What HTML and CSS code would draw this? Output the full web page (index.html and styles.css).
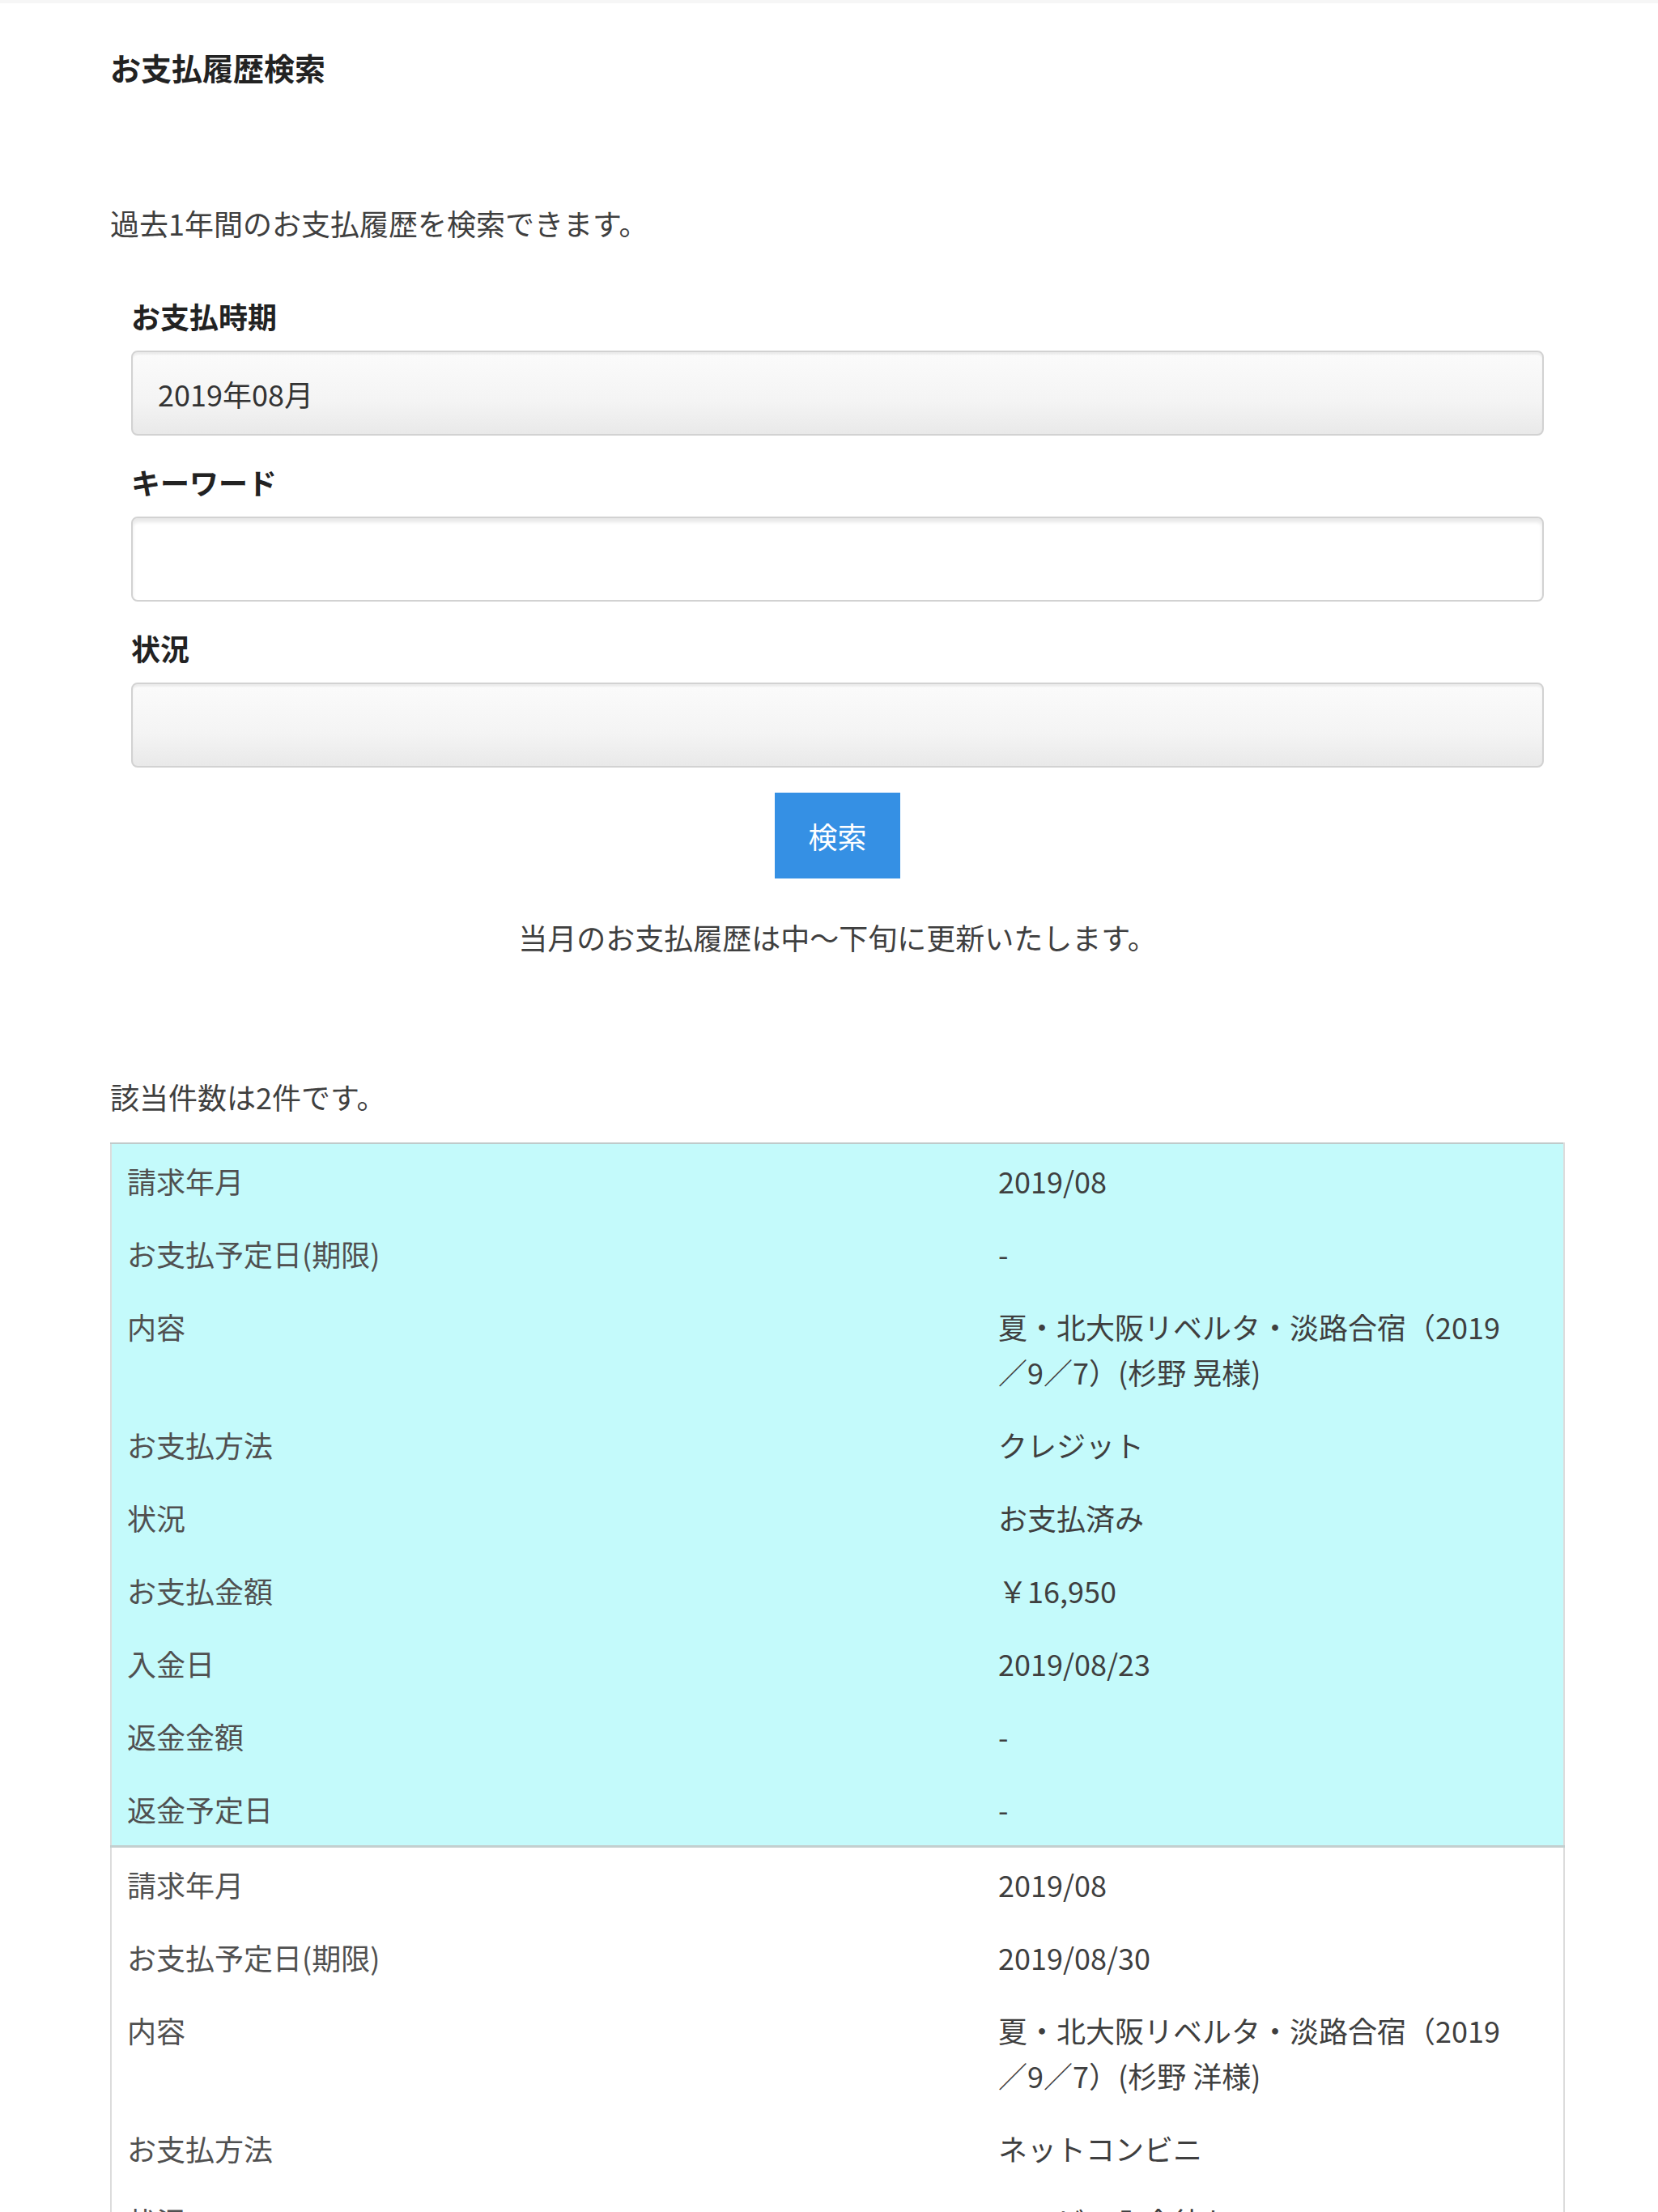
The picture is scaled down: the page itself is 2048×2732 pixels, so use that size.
FILE: index.html
```html
<!DOCTYPE html>
<html lang="ja">
<head>
    <meta charset="UTF-8">
    <meta name="viewport" content="width=device-width, initial-scale=1.0">
    <title>お支払履歴検索</title>
    <link rel="stylesheet" href="styles.css">
</head>
<body>
    <div class="topbar"></div>

    <div class="page">
        <h1 class="page-title">お支払履歴検索</h1>

        <p class="lead">過去1年間のお支払履歴を検索できます。</p>

        <form class="search-form" onsubmit="return false;">
            <div class="form-group">
                <label for="payMonth">お支払時期</label>
                <select id="payMonth" class="field field-select">
                    <option>2019年08月</option>
                    <option>2019年07月</option>
                    <option>2019年06月</option>
                </select>
            </div>

            <div class="form-group">
                <label for="keyword">キーワード</label>
                <input type="text" id="keyword" class="field field-input">
            </div>

            <div class="form-group">
                <label for="status">状況</label>
                <select id="status" class="field field-select">
                    <option></option>
                    <option>お支払済み</option>
                    <option>コンビニ入金待ち</option>
                </select>
            </div>

            <div class="actions">
                <button type="submit" class="btn-search">検索</button>
            </div>
        </form>

        <p class="note">当月のお支払履歴は中～下旬に更新いたします。</p>

        <p class="count">該当件数は2件です。</p>

        <table class="history">
            <colgroup>
                <col class="col-label">
                <col class="col-value">
            </colgroup>
            <tbody class="record record-paid">
                <tr><th>請求年月</th><td>2019/08</td></tr>
                <tr><th>お支払予定日(期限)</th><td>-</td></tr>
                <tr><th>内容</th><td>夏・北大阪リベルタ・淡路合宿（2019／9／7）(杉野 晃様)</td></tr>
                <tr><th>お支払方法</th><td>クレジット</td></tr>
                <tr><th>状況</th><td>お支払済み</td></tr>
                <tr><th>お支払金額</th><td>￥16,950</td></tr>
                <tr><th>入金日</th><td>2019/08/23</td></tr>
                <tr><th>返金金額</th><td>-</td></tr>
                <tr><th>返金予定日</th><td>-</td></tr>
            </tbody>
            <tbody class="record">
                <tr><th>請求年月</th><td>2019/08</td></tr>
                <tr><th>お支払予定日(期限)</th><td>2019/08/30</td></tr>
                <tr><th>内容</th><td>夏・北大阪リベルタ・淡路合宿（2019／9／7）(杉野 洋様)</td></tr>
                <tr><th>お支払方法</th><td>ネットコンビニ</td></tr>
                <tr><th>状況</th><td>コンビニ入金待ち</td></tr>
                <tr><th>お支払金額</th><td>￥16,950</td></tr>
                <tr><th>入金日</th><td>-</td></tr>
                <tr><th>返金金額</th><td>-</td></tr>
                <tr><th>返金予定日</th><td>-</td></tr>
            </tbody>
        </table>
    </div>
</body>
</html>
```

FILE: styles.css
```css
body {
    margin: 0;
    font-family: "Noto Sans CJK JP", "Noto Sans", sans-serif;
    font-size: 36px;
    line-height: 54px;
    color: #3f3f3f;
    background: #fff;
}

.topbar {
    height: 4px;
    background: #f6f6f6;
}

.page {
    padding: 50px 115px 40px 136px;
}

.page-title {
    margin: 0;
    font-size: 38px;
    line-height: 57px;
    font-weight: bold;
    color: #222;
}

.lead {
    margin: 137px 0 0;
}

.search-form {
    margin-top: 61px;
    padding: 0 26px;
}

.form-group {
    margin-bottom: 30px;
}

.form-group label {
    display: block;
    font-weight: bold;
    color: #222;
    margin-bottom: 16px;
}

.field {
    display: block;
    box-sizing: border-box;
    width: 100%;
    height: 105px;
    margin: 0;
    padding: 0 31px;
    font-family: inherit;
    font-size: 36px;
    color: #333;
    border: 2px solid #d2d2d2;
    border-radius: 8px;
}

.field-select {
    -webkit-appearance: none;
    appearance: none;
    background: linear-gradient(#fbfbfb, #f4f4f4 60%, #e9e9e9);
    box-shadow: inset 0 3px 2px rgba(0, 0, 0, 0.06);
}

.field-input {
    background: #fff;
    box-shadow: inset 0 5px 4px rgba(0, 0, 0, 0.09);
}

.actions {
    text-align: center;
    margin-top: 31px;
}

.btn-search {
    width: 155px;
    height: 106px;
    border: none;
    border-radius: 0;
    background: #3590e4;
    color: #fff;
    font-family: inherit;
    font-size: 36px;
    cursor: pointer;
}

.note {
    margin: 45px 0 0;
    text-align: center;
}

.count {
    margin: 143px 0 0;
}

.history {
    width: 100%;
    margin-top: 30px;
    border-collapse: collapse;
    table-layout: fixed;
    border: 2px solid #dcdcdc;
    border-top-color: #bfcaca;
}

.col-label {
    width: 60%;
}

.history th,
.history td {
    padding: 17px 19px;
    font-weight: normal;
    text-align: left;
    vertical-align: top;
    line-height: 56px;
}

.history td {
    padding-right: 50px;
}

.history th {
    color: #505050;
}

.record + .record {
    border-top: 3px solid #c3cfcf;
}

.record-paid {
    background: #c4fafb;
}
```
